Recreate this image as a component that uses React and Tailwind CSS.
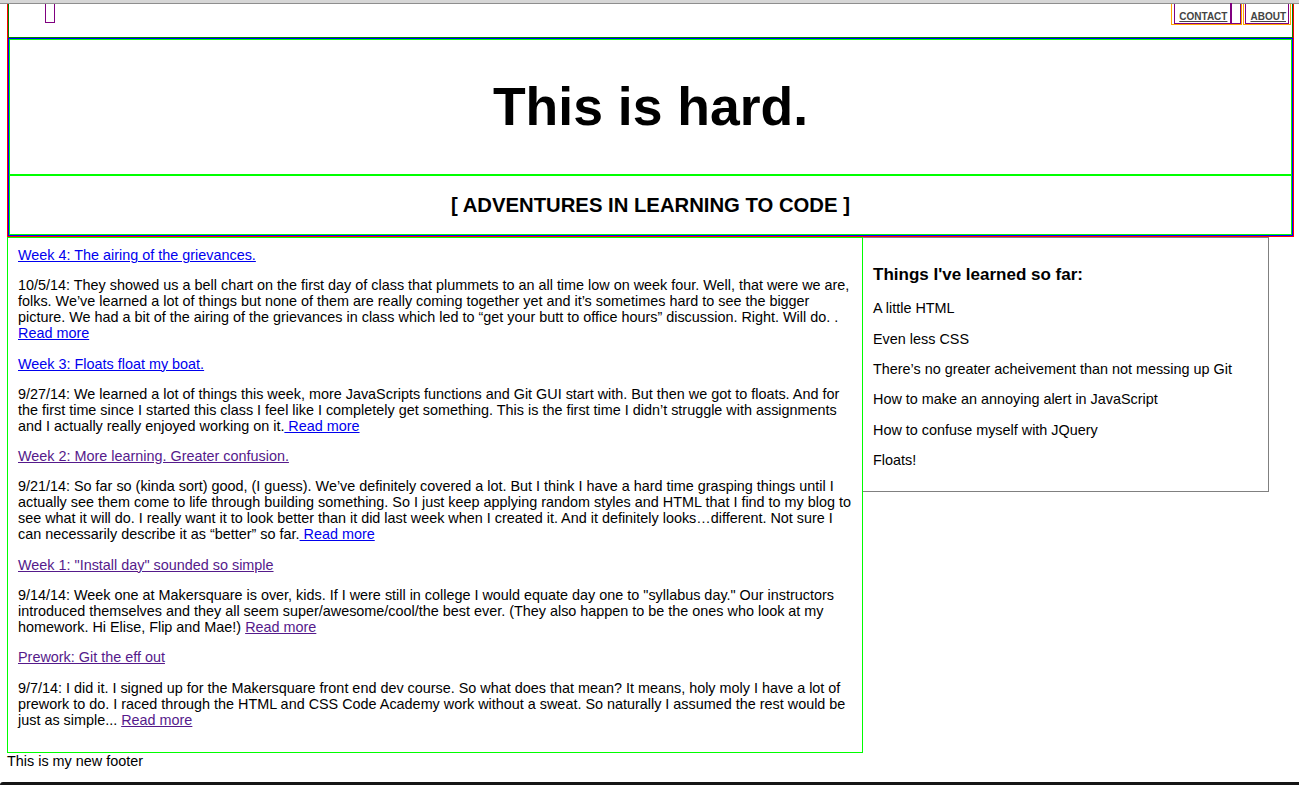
import { Fragment } from 'react';

const POSTS = [
    {
        title: 'Week 4: The airing of the grievances.',
        titleVisited: false,
        lines: [
            '10/5/14: They showed us a bell chart on the first day of class that plummets to an all time low on week four. Well, that were we are,',
            'folks. We\u2019ve learned a lot of things but none of them are really coming together yet and it\u2019s sometimes hard to see the bigger',
            'picture. We had a bit of the airing of the grievances in class which led to \u201cget your butt to office hours\u201d discussion. Right. Will do. .',
        ],
        more: 'Read more',
        moreBreak: true,
        moreVisited: false,
    },
    {
        title: 'Week 3: Floats float my boat.',
        titleVisited: false,
        lines: [
            '9/27/14: We learned a lot of things this week, more JavaScripts functions and Git GUI start with. But then we got to floats. And for',
            'the first time since I started this class I feel like I completely get something. This is the first time I didn\u2019t struggle with assignments',
            'and I actually really enjoyed working on it.',
        ],
        more: ' Read more',
        moreVisited: false,
    },
    {
        title: 'Week 2: More learning. Greater confusion.',
        titleVisited: true,
        lines: [
            '9/21/14: So far so (kinda sort) good, (I guess). We\u2019ve definitely covered a lot. But I think I have a hard time grasping things until I',
            'actually see them come to life through building something. So I just keep applying random styles and HTML that I find to my blog to',
            'see what it will do. I really want it to look better than it did last week when I created it. And it definitely looks\u2026different. Not sure I',
            'can necessarily describe it as \u201cbetter\u201d so far.',
        ],
        more: ' Read more',
        moreVisited: false,
    },
    {
        title: 'Week 1: "Install day" sounded so simple',
        titleVisited: true,
        lines: [
            '9/14/14: Week one at Makersquare is over, kids. If I were still in college I would equate day one to "syllabus day." Our instructors',
            'introduced themselves and they all seem super/awesome/cool/the best ever. (They also happen to be the ones who look at my',
            'homework. Hi Elise, Flip and Mae!) ',
        ],
        more: 'Read more',
        moreVisited: true,
    },
    {
        title: 'Prework: Git the eff out',
        titleVisited: true,
        lines: [
            '9/7/14: I did it. I signed up for the Makersquare front end dev course. So what does that mean? It means, holy moly I have a lot of',
            'prework to do. I raced through the HTML and CSS Code Academy work without a sweat. So naturally I assumed the rest would be',
            'just as simple... ',
        ],
        more: 'Read more',
        moreVisited: true,
    },
];

const LEARNED = [
    'A little HTML',
    'Even less CSS',
    'There\u2019s no greater acheivement than not messing up Git',
    'How to make an annoying alert in JavaScript',
    'How to confuse myself with JQuery',
    'Floats!',
];

function Post({ post }) {
    return (
        <>
            <p>
                <a href="#" className={`underline ${post.titleVisited ? 'text-[#551a8b]' : 'text-[#0000ee]'}`}>
                    {post.title}
                </a>
            </p>
            <p className="whitespace-pre">
                {post.lines.map((line, i) => (
                    <Fragment key={i}>
                        {line}
                        {i < post.lines.length - 1 && <br />}
                    </Fragment>
                ))}
                {post.moreBreak && <br />}
                <a href="#" className={`underline ${post.moreVisited ? 'text-[#551a8b]' : 'text-[#0000ee]'}`}>
                    {post.more}
                </a>
            </p>
        </>
    );
}

export default function App() {
    return (
        <div className="h-[785px] w-full overflow-hidden bg-white flex flex-col font-['Liberation_Sans',Arial,sans-serif] text-[14.4px] leading-[16px] text-black">
            {/* window chrome */}
            <div className="h-[4px] bg-[#d6d6d6] border-b border-[#8e8e8e] shrink-0" />

            <div className="flex-1 pl-[7px]">
                {/* header wrapper */}
                <header className="w-[1287px] border-x border-b border-[#ff0000]">
                    {/* nav */}
                    <nav className="h-[34px] border-x border-b border-[#008000] flex items-start justify-between">
                        <span className="ml-[36px] w-[10px] h-[19px] border-x border-b border-[#800080]" />
                        <ul className="flex items-start gap-[1px] mr-[1px] text-[10px] leading-[12px] font-bold text-[#444]">
                            <li className="h-[21px] pl-[2px] border-x border-b border-[#ffa500] flex">
                                <a href="#" className="h-[20px] pl-[4px] border-x border-b border-[#800080] flex items-end underline">
                                    CONTACT
                                    <span className="ml-[3px] w-[2px] h-[20px] bg-[#800080]" />
                                    <span className="w-[8px]" />
                                </a>
                            </li>
                            <li className="h-[21px] px-[1px] border-x border-b border-[#ffa500] flex">
                                <a href="#" className="h-[20px] pl-[4px] pr-[2px] border-x border-b border-[#800080] flex items-end underline">
                                    ABOUT
                                </a>
                            </li>
                        </ul>
                    </nav>

                    {/* title block */}
                    <div className="border border-[#0000ff]">
                        <div className="h-[136px] border border-[#00ff00] flex items-center justify-center">
                            <h1 className="text-[53.5px] leading-none font-bold">This is hard.</h1>
                        </div>
                        <div className="h-[60px] border border-[#00ff00] flex items-center justify-center">
                            <h2 className="text-[20.3px] leading-none font-bold">[ ADVENTURES IN LEARNING TO CODE ]</h2>
                        </div>
                    </div>
                </header>

                {/* body */}
                <div className="flex items-start">
                    <main className="w-[856px] border border-[#00ff00] px-[10px] pt-[9px] pb-[24px] flex flex-col gap-[14.3px]">
                        {POSTS.map((post, i) => (
                            <Post key={i} post={post} />
                        ))}
                    </main>

                    <aside className="w-[406px] border-y border-r border-[#808080] px-[10px] pt-[27px] pb-[23px]">
                        <h3 className="text-[17px] leading-[19px] font-bold">Things I&apos;ve learned so far:</h3>
                        <ul className="mt-[16.4px] flex flex-col gap-[14.3px]">
                            {LEARNED.map((item, i) => (
                                <li key={i}>{item}</li>
                            ))}
                        </ul>
                    </aside>
                </div>

                <footer>This is my new footer</footer>
            </div>

            {/* window bottom edge */}
            <div className="h-[3px] bg-[#151515] rounded-tl-[3px] shrink-0" />
        </div>
    );
}
